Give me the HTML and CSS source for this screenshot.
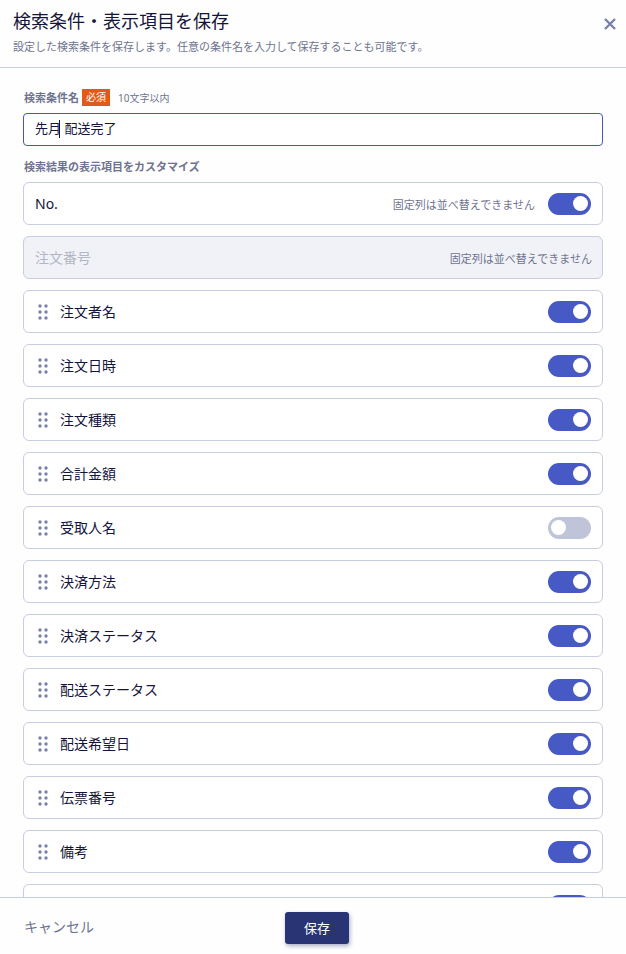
FILE: index.html
```html
<!DOCTYPE html>
<html lang="ja">
<head>
  <meta charset="UTF-8">
  <meta name="viewport" content="width=device-width, initial-scale=1.0">
  <title>検索条件・表示項目を保存</title>
  <link rel="stylesheet" href="styles.css">
</head>
<body>
  <form class="modal">
    <header class="modal-header">
      <div>
        <h1>検索条件・表示項目を保存</h1>
        <p>設定した検索条件を保存します。任意の条件名を入力して保存することも可能です。</p>
      </div>
      <button type="button" class="close-btn" aria-label="閉じる">
        <svg width="14" height="14" viewBox="0 0 14 14"><path d="M2 2l10 10M12 2L2 12"/></svg>
      </button>
    </header>

    <main class="modal-body">
      <div class="field-label">
        <label for="condition-name">検索条件名</label>
        <span class="required">必須</span>
        <span class="hint">10文字以内</span>
      </div>
      <div class="field">
        <input type="text" id="condition-name" value="先月 配送完了">
        <span class="caret"></span>
      </div>

      <h2>検索結果の表示項目をカスタマイズ</h2>
      <ul class="items" id="items">
        <li class="item">
          <label for="col-no">No.</label>
          <span class="note">固定列は並べ替えできません</span>
          <input type="checkbox" class="toggle" id="col-no" checked>
        </li>
        <li class="item disabled">
          <span class="name">注文番号</span>
          <span class="note">固定列は並べ替えできません</span>
        </li>
      </ul>
    </main>

    <footer class="modal-footer">
      <button type="button" class="cancel-btn">キャンセル</button>
      <button type="submit" class="save-btn">保存</button>
    </footer>
  </form>

  <script src="script.js"></script>
</body>
</html>
```
FILE: styles.css
```css
* {
  box-sizing: border-box;
}
body {
  margin: 0;
  background: #fefefe;
  color: #14143c;
  font-family: "Noto Sans", "Noto Sans CJK JP", sans-serif;
  font-size: 14px;
}
h1, h2, p, ul {
  margin: 0;
  padding: 0;
}
button, input {
  font-family: inherit;
  color: inherit;
}
button {
  border: none;
  background: none;
  padding: 0;
  cursor: pointer;
}
.modal {
  display: flex;
  flex-direction: column;
  height: 100vh;
}

/* header */
.modal-header {
  display: flex;
  justify-content: space-between;
  align-items: flex-start;
  padding: 9px 9px 12px 13px;
  border-bottom: 1px solid #c8cde0;
}
.modal-header h1 {
  font-size: 18px;
  font-weight: 400;
  line-height: 24px;
  margin-bottom: 6px;
}
.modal-header p {
  font-size: 11px;
  line-height: 16px;
  color: #6f7390;
}
.close-btn {
  display: flex;
  margin-top: 8px;
}
.close-btn svg {
  fill: none;
  stroke: #7a80ac;
  stroke-width: 2.4;
}

/* body */
.modal-body {
  flex: 1;
  min-height: 0;
  padding: 21px 23px 0;
  overflow-y: auto;
  scrollbar-width: none;
}
.field-label {
  display: flex;
  align-items: center;
  height: 17px;
  margin-bottom: 7px;
  padding-left: 1px;
  font-size: 10px;
  color: #6f7390;
}
.field-label label {
  padding-bottom: 2px;
  font-size: 11px;
  font-weight: 700;
}
.required {
  margin: 0 8px 0 3px;
  padding: 0 4px;
  line-height: 17px;
  background: #e05a1a;
  color: #fff;
}
.field {
  position: relative;
  font-size: 13px;
}
.field input {
  display: block;
  width: 100%;
  height: 33px;
  padding: 0 11px 4px;
  border: 1px solid #4657b8;
  border-radius: 4px;
  background: #fff;
  font-size: 13px;
  outline: none;
}
.caret {
  position: absolute;
  top: 7px;
  left: 36px;
  width: 1px;
  height: 18px;
  background: #14143c;
}
.modal-body h2 {
  margin: 13px 0 7px;
  padding-left: 1px;
  font-size: 11px;
  line-height: 16px;
  color: #6f7390;
}

/* rows */
.items {
  display: flex;
  flex-direction: column;
  gap: 11px;
  list-style: none;
}
.item {
  display: flex;
  align-items: center;
  height: 43px;
  padding: 0 11px;
  border: 1px solid #c8cde0;
  border-radius: 6px;
  background: #fff;
}
.item label, .item .name {
  flex: 1;
}
.item .name, .grip + label {
  padding-bottom: 2px;
}
.item.disabled {
  padding-right: 10px;
  background: #f1f2f7;
}
.item.disabled .name {
  color: #b4b6c6;
}
.note {
  font-size: 11px;
  color: #6f7390;
}
.note + .toggle {
  margin-left: 13px;
}
.grip {
  margin: 0 12px 0 3px;
  fill: #7a80ac;
  cursor: grab;
}
.toggle {
  appearance: none;
  display: flex;
  align-items: center;
  width: 43px;
  height: 22px;
  margin: 0;
  padding: 0 3px;
  border-radius: 11px;
  background: #c0c4d9;
  cursor: pointer;
}
.toggle::before {
  content: "";
  width: 15px;
  height: 15px;
  border-radius: 50%;
  background: #fff;
}
.toggle:checked {
  justify-content: flex-end;
  background: #4659c5;
}

/* footer */
.modal-footer {
  display: grid;
  grid-template-columns: 1fr auto 1fr;
  align-items: center;
  padding: 14px 16px 10px 24px;
  border-top: 1px solid #c8cde0;
}
.cancel-btn {
  justify-self: start;
  padding-bottom: 4px;
  font-size: 14px;
  color: #6f7390;
}
.save-btn {
  width: 64px;
  height: 32px;
  padding-bottom: 2px;
  border-radius: 3px;
  background: #293474;
  color: #fff;
  font-size: 13px;
  box-shadow: 1px 2px 4px rgba(41, 52, 116, 0.4);
}
```
FILE: script.js
```js
const columns = [
  { name: '注文者名', on: true },
  { name: '注文日時', on: true },
  { name: '注文種類', on: true },
  { name: '合計金額', on: true },
  { name: '受取人名', on: false },
  { name: '決済方法', on: true },
  { name: '決済ステータス', on: true },
  { name: '配送ステータス', on: true },
  { name: '配送希望日', on: true },
  { name: '伝票番号', on: true },
  { name: '備考', on: true },
  { name: '', on: true }
];

const grip = `<svg class="grip" width="10" height="16" viewBox="0 0 10 16">
  <circle cx="2" cy="2" r="1.7"/><circle cx="8" cy="2" r="1.7"/>
  <circle cx="2" cy="8" r="1.7"/><circle cx="8" cy="8" r="1.7"/>
  <circle cx="2" cy="14" r="1.7"/><circle cx="8" cy="14" r="1.7"/>
</svg>`;

const items = document.getElementById('items');

columns.forEach((column, i) => {
  const li = document.createElement('li');
  li.className = 'item';
  li.innerHTML = `${grip}
    <label for="col-${i}">${column.name}</label>
    <input type="checkbox" class="toggle" id="col-${i}" ${column.on ? 'checked' : ''}>`;
  items.appendChild(li);
});
```
